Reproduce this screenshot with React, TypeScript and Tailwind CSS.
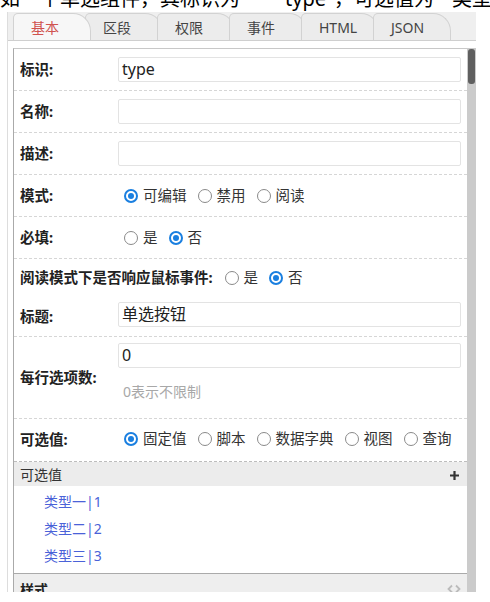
import React from 'react';

const tabs = ['基本', '区段', '权限', '事件', 'HTML', 'JSON'];

function Radio({ checked, label }: { checked?: boolean; label: string }) {
  return (
    <span className="inline-flex items-center mr-[11px]">
      {checked ? (
        <span className="w-[14px] h-[14px] rounded-full border-2 border-[#1a7fe0] bg-white flex items-center justify-center">
          <span className="w-[6px] h-[6px] rounded-full bg-[#1a7fe0]" />
        </span>
      ) : (
        <span className="w-[14px] h-[14px] rounded-full border border-[#8a8a8a] bg-white" />
      )}
      <span className="ml-[5px] text-[14.5px] text-[#333]">{label}</span>
    </span>
  );
}

function Label({ children }: { children: React.ReactNode }) {
  return <div className="w-[104px] shrink-0 pl-[6px] text-[14.5px] font-bold text-[#222]">{children}</div>;
}

function Input({ value }: { value?: string }) {
  return (
    <div className="flex-1 h-[25px] border border-[#e3e3e3] rounded-[2px] pl-[3px] text-[16px] leading-[23px] text-[#222]">
      {value}
    </div>
  );
}

export default function App() {
  return (
    <div className="w-[490px] h-[602px] bg-white overflow-hidden font-['Noto_Sans','Noto_Sans_CJK_SC',sans-serif]">
      {/* cut-off caption line */}
      <div className="h-[12px] overflow-hidden">
        <div className="-mt-[11px] text-[20px] leading-[20px] whitespace-nowrap text-black">
          如一个单选组件，其标识为<span className="ml-[45px]">type"，可选值为</span>
          <span className="ml-[18px]">类型一|1</span>
        </div>
      </div>

      <div className="ml-[7px] w-[469px] h-[580px] border-l border-[#dddddd] flex flex-col">
        {/* tabs */}
        <div className="h-[29px] shrink-0 bg-[#efefef] border-b border-[#cfcfcf] flex items-end pl-[5px]">
          {tabs.map((t, i) => (
            <div
              key={t}
              className={`relative h-[27px] w-[78px] shrink-0 rounded-tl-[5px] rounded-tr-[18px] border border-b-0 border-[#d2d2d2] pl-[17px] text-[14px] leading-[28px] ${
                i === 0 ? 'bg-[#f7f7f7] text-[#d0534f] z-10' : '-ml-[6px] bg-[#ececec] text-[#444]'
              }`}
            >
              {t}
            </div>
          ))}
        </div>

        <div className="h-[7px] shrink-0" />

        <div className="flex flex-1 min-h-0 pl-[5px]">
          {/* panel */}
          <div className="flex-1 border-l border-t border-l-[#aaaaaa] border-t-[#c8c8c8] overflow-hidden">
            <div className="h-[42px] flex items-center border-b border-dashed border-[#d6d6d6] pr-[6px]">
              <Label>标识:</Label>
              <Input value="type" />
            </div>
            <div className="h-[42px] flex items-center border-b border-dashed border-[#d6d6d6] pr-[6px]">
              <Label>名称:</Label>
              <Input />
            </div>
            <div className="h-[42px] flex items-center border-b border-dashed border-[#d6d6d6] pr-[6px]">
              <Label>描述:</Label>
              <Input />
            </div>
            <div className="h-[42px] flex items-center border-b border-dashed border-[#d6d6d6]">
              <Label>模式:</Label>
              <div className="pl-[6px] flex items-center">
                <Radio checked label="可编辑" />
                <Radio label="禁用" />
                <Radio label="阅读" />
              </div>
            </div>
            <div className="h-[42px] flex items-center border-b border-dashed border-[#d6d6d6]">
              <Label>必填:</Label>
              <div className="pl-[6px] flex items-center">
                <Radio label="是" />
                <Radio checked label="否" />
              </div>
            </div>
            <div className="h-[38px] flex items-center">
              <div className="pl-[6px] text-[14.5px] font-bold text-[#222] mr-[12px]">阅读模式下是否响应鼠标事件:</div>
              <Radio label="是" />
              <Radio checked label="否" />
            </div>
            <div className="h-[40px] flex items-center border-b border-dashed border-[#d6d6d6] pr-[6px]">
              <Label>标题:</Label>
              <div className="flex-1 flex -mt-[5px]">
                <Input value="单选按钮" />
              </div>
            </div>
            <div className="h-[82px] flex items-center border-b border-dashed border-[#d6d6d6] pr-[6px]">
              <Label>每行选项数:</Label>
              <div className="flex-1 self-start pt-[6px]">
                <div className="flex">
                  <Input value="0" />
                </div>
                <div className="mt-[14px] pl-[5px] text-[14px] leading-[20px] text-[#a8a8a8]">0表示不限制</div>
              </div>
            </div>
            <div className="h-[43px] flex items-center border-b border-dashed border-[#bdbdbd]">
              <Label>可选值:</Label>
              <div className="pl-[6px] flex items-center -mt-[3px]">
                <Radio checked label="固定值" />
                <Radio label="脚本" />
                <Radio label="数据字典" />
                <Radio label="视图" />
                <Radio label="查询" />
              </div>
            </div>

            <div className="h-[24px] bg-[#ececec] flex items-center justify-between pl-[6px] pr-[8px]">
              <span className="text-[14px] text-[#333]">可选值</span>
              <svg width="9" height="9" viewBox="0 0 9 9" className="mt-[2px]">
                <path d="M3.4 0h2.2v3.4H9v2.2H5.6V9H3.4V5.6H0V3.4h3.4z" fill="#333" />
              </svg>
            </div>
            <div className="h-[88px] border-b border-[#aaaaaa] pt-[2px] pl-[30px]">
              {['类型一|1', '类型二|2', '类型三|3'].map((v) => (
                <div key={v} className="text-[14px] leading-[27px] text-[#4a62d8]">
                  {v}
                </div>
              ))}
            </div>
            <div className="h-[24px] bg-[#eeeeee] flex items-center justify-between pl-[6px] pr-[6px]">
              <span className="text-[14px] font-bold text-[#222] mt-[6px]">样式</span>
              <svg width="14" height="10" viewBox="0 0 14 10" className="mt-[6px]">
                <path d="M5 1.5L1.5 5L5 8.5M9 1.5L12.5 5L9 8.5" stroke="#bbbbbb" strokeWidth="1.8" fill="none" />
              </svg>
            </div>
          </div>

          {/* scrollbar */}
          <div className="w-[9px] shrink-0 bg-[#cbcbcb] flex justify-center">
            <div className="w-[7px] h-[35px] mt-[1px] rounded-[3px] bg-[#5f5f5f]" />
          </div>
        </div>
      </div>
    </div>
  );
}
